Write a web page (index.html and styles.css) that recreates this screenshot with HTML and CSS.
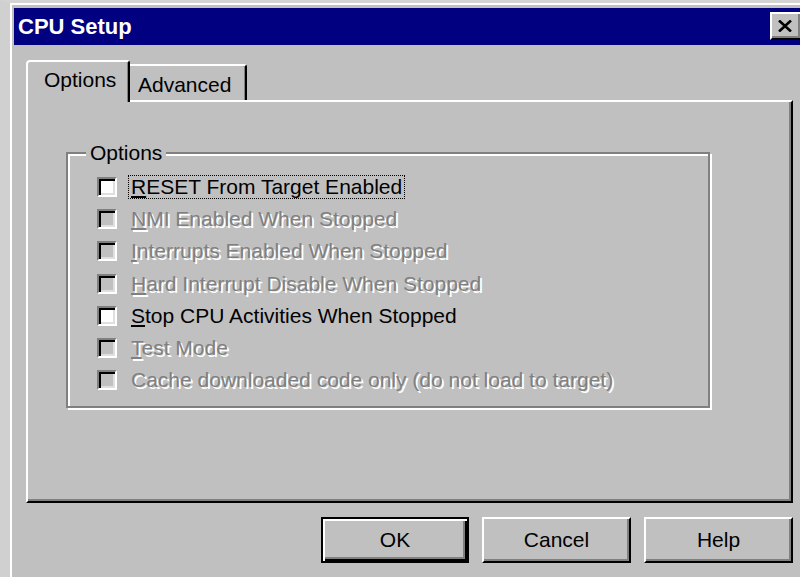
FILE: index.html
```html
<!DOCTYPE html>
<html lang="en">
<head>
<meta charset="utf-8">
<title>CPU Setup</title>
<link rel="stylesheet" href="styles.css">
</head>
<body>
<div class="window">
  <div class="frame">
    <div class="titlebar">
      <span class="title">CPU Setup</span>
      <button class="close" type="button" aria-label="Close">
        <svg width="14" height="12" viewBox="0 0 14 12" aria-hidden="true">
          <path d="M1 0.5 L13 11.5 M13 0.5 L1 11.5" stroke="#000" stroke-width="2.6" fill="none"/>
        </svg>
      </button>
    </div>

    <div class="content">
      <div class="tabs">
        <div class="tab active">Options</div>
        <div class="tab">Advanced</div>
      </div>

      <div class="panel">
        <div class="group">
          <span class="group-label">Options</span>
          <div class="row">
            <span class="check"></span>
            <span class="label focus"><u>R</u>ESET From Target Enabled</span>
          </div>
          <div class="row disabled">
            <span class="check"></span>
            <span class="label"><u>N</u>MI Enabled When Stopped</span>
          </div>
          <div class="row disabled">
            <span class="check"></span>
            <span class="label"><u>I</u>nterrupts Enabled When Stopped</span>
          </div>
          <div class="row disabled">
            <span class="check"></span>
            <span class="label"><u>H</u>ard Interrupt Disable When Stopped</span>
          </div>
          <div class="row">
            <span class="check"></span>
            <span class="label"><u>S</u>top CPU Activities When Stopped</span>
          </div>
          <div class="row disabled">
            <span class="check"></span>
            <span class="label"><u>T</u>est Mode</span>
          </div>
          <div class="row disabled">
            <span class="check"></span>
            <span class="label">Cache downloaded code only (do not load to target)</span>
          </div>
        </div>
      </div>

      <div class="buttons">
        <button class="btn default" type="button">OK</button>
        <button class="btn" type="button">Cancel</button>
        <button class="btn" type="button">Help</button>
      </div>
    </div>
  </div>
</div>
</body>
</html>
```

FILE: styles.css
```css
html, body {
  margin: 0;
  padding: 0;
  height: 100%;
  overflow: hidden;
  background: #c0c0c0;
}

body {
  font-family: "Liberation Sans", Arial, sans-serif;
  font-size: 21px;
  color: #000;
}

/* dialog frame: light outer edge, white highlight inside it */
.window {
  border-top: 3px solid #d4d4d4;
  border-left: 10px solid #d0d0d0;
  height: 100%;
  box-sizing: border-box;
}

.frame {
  border-top: 2px solid #fff;
  border-left: 2px solid #fff;
  padding: 3px 0 0 2px;
  height: 100%;
  box-sizing: border-box;
  background: #c0c0c0;
}

/* caption */
.titlebar {
  display: flex;
  align-items: flex-start;
  justify-content: space-between;
  height: 37px;
  background: #000080;
  padding-left: 4px;
}

.title {
  color: #fff;
  font-weight: bold;
  font-size: 22px;
  line-height: 37px;
}

.close {
  margin-top: 4px;
  margin-right: -2px;
  width: 32px;
  height: 28px;
  padding: 0;
  background: #c0c0c0;
  border: 2px solid;
  border-color: #fff #000 #000 #fff;
  box-shadow: inset -2px -2px 0 #808080;
  display: flex;
  align-items: center;
  justify-content: center;
  box-sizing: border-box;
}

.close svg {
  display: block;
  margin-left: -2px;
  margin-top: -1px;
}

/* body of the dialog */
.content {
  padding: 15px 0 0 12px;
  width: 767px;
}

.tabs {
  display: flex;
  align-items: flex-end;
}

.tab {
  box-sizing: border-box;
  background: #c0c0c0;
  border-top: 2px solid #fff;
  border-right: 2px solid #000;
  box-shadow: inset -1px 0 0 #808080;
  line-height: 22px;
}

.tab.active {
  position: relative;
  z-index: 1;
  width: 104px;
  height: 42px;
  margin-bottom: -2px;
  border-left: 2px solid #fff;
  border-top-left-radius: 4px;
  border-top-right-radius: 3px;
  padding: 7px 0 0 16px;
}

.tab:not(.active) {
  width: 117px;
  height: 36px;
  padding: 8px 0 0 8px;
  border-top-right-radius: 3px;
}

.panel {
  box-sizing: border-box;
  height: 403px;
  border: 2px solid;
  border-color: #fff #000 #000 #fff;
  box-shadow: inset -2px -2px 0 #808080;
  padding: 50px 0 0 38px;
}

/* etched group box */
.group {
  position: relative;
  box-sizing: border-box;
  width: 644px;
  height: 256px;
  border: 2px solid #808080;
  box-shadow: inset 2px 2px 0 #fff, 2px 2px 0 #fff;
  padding: 17px 0 0 29px;
}

.group-label {
  position: absolute;
  top: -12px;
  left: 18px;
  padding: 0 4px;
  background: #c0c0c0;
  line-height: 22px;
}

.row {
  display: flex;
  align-items: center;
  height: 32.2px;
}

.check {
  box-sizing: border-box;
  width: 20px;
  height: 20px;
  flex: none;
  background: #fff;
  border: 2px solid;
  border-color: #808080 #fff #fff #808080;
  box-shadow: inset 2px 2px 0 #000, inset -2px -2px 0 #dfdfdf;
}

.label {
  margin-left: 11px;
  padding: 0 2px;
  line-height: 22px;
  border: 1px dotted transparent;
  white-space: nowrap;
}

.label u {
  text-decoration-thickness: 2px;
  text-underline-offset: 2px;
}

.label.focus {
  border-color: #000;
}

.row.disabled .check {
  background: #c0c0c0;
}

.row.disabled .label {
  color: #808080;
  text-shadow: 2px 2px 0 #fff;
}

/* push buttons */
.buttons {
  display: flex;
  justify-content: flex-end;
  gap: 13px;
  margin-top: 14px;
}

.btn {
  box-sizing: border-box;
  width: 149px;
  height: 46px;
  padding: 0;
  font: inherit;
  color: #000;
  background: #c0c0c0;
  border: 2px solid;
  border-color: #fff #000 #000 #fff;
  box-shadow: inset -2px -2px 0 #808080;
}

.btn.default {
  width: 148px;
  border-color: #000;
  box-shadow: inset 2px 2px 0 #fff, inset -2px -2px 0 #000, inset -4px -4px 0 #808080;
}
```
